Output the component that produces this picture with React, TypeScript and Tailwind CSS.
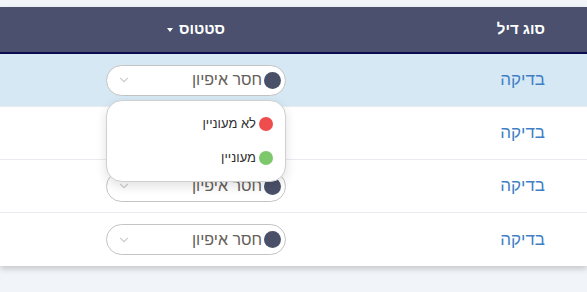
import { ChevronDown } from "lucide-react";

const rows = [
  { type: "בדיקה", status: "חסר איפיון", active: true },
  { type: "בדיקה", status: "חסר איפיון", active: false },
  { type: "בדיקה", status: "חסר איפיון", active: false },
  { type: "בדיקה", status: "חסר איפיון", active: false },
];

const options = [
  { label: "לא מעוניין", color: "bg-[#ef4d4d]" },
  { label: "מעוניין", color: "bg-[#7dc86a]" },
];

function StatusSelect({ value, open }: { value: string; open: boolean }) {
  return (
    <div className="relative">
      <div className="flex h-[31px] w-[180px] items-center rounded-full border border-[#c4c4c4] bg-white pl-[10px] pr-[4px]">
        <span className="h-[17px] w-[17px] shrink-0 rounded-full bg-[#4a5068]" />
        <span className="mr-[2px] text-[16px] leading-none text-[#66605a]">{value}</span>
        <ChevronDown className="mr-auto h-[14px] w-[14px] text-[#cfcfcf]" strokeWidth={2} />
      </div>
      {open && (
        <div className="absolute right-0 top-[calc(100%+4px)] z-10 flex w-[180px] flex-col gap-[20px] rounded-[16px] border border-[#cfcfcf] bg-white pb-[16px] pr-[12px] pt-[16px] shadow-[0_4px_12px_rgba(0,0,0,0.12)]">
          {options.map((o) => (
            <div key={o.label} className="flex items-center gap-[3px]">
              <span className={`h-[14px] w-[14px] rounded-full ${o.color}`} />
              <span className="text-[13px] leading-[14px] text-[#2f2f2f]">{o.label}</span>
            </div>
          ))}
        </div>
      )}
    </div>
  );
}

export default function App() {
  return (
    <div
      dir="rtl"
      className="min-h-[292px] w-full bg-[#f1f4f8] pt-[7px]"
      style={{ fontFamily: '"Liberation Sans", "DejaVu Sans", sans-serif' }}
    >
      <div className="bg-white shadow-[0_3px_6px_rgba(0,0,0,0.18)]">
        <div className="flex h-[47px] items-center border-b-2 border-[#0b0b52] bg-[#4a506d] text-[15px] font-bold text-white">
          <div className="w-[291px] pr-[42px]">סוג דיל</div>
          <div className="flex w-[200px] items-center justify-center gap-[6px]">
            <span>סטטוס</span>
            <span className="h-0 w-0 border-x-[3px] border-t-[4px] border-x-transparent border-t-white" />
          </div>
          <div className="flex-1" />
        </div>
        {rows.map((r, i) => (
          <div
            key={i}
            className={`flex h-[53px] items-center ${i < rows.length - 1 ? "border-b border-[#e8ebef]" : ""} ${r.active ? "bg-[#d7e8f5]" : "bg-white"}`}
          >
            <div className="w-[291px] pr-[42px] text-[17px] text-[#3f7fc6]">{r.type}</div>
            <div className="flex w-[200px] justify-center">
              <StatusSelect value={r.status} open={r.active} />
            </div>
            <div className="flex-1" />
          </div>
        ))}
      </div>
    </div>
  );
}
